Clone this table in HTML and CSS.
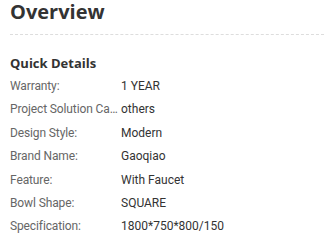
FILE: index.html
```html
<!DOCTYPE html>
<html>
<head>
<meta charset="utf-8">
<link rel="stylesheet" href="styles.css">
</head>
<body>
<div class="overview">
  <h2 class="title">Overview</h2>
  <h3 class="subtitle">Quick Details</h3>
  <dl class="details">
    <div class="row"><dt class="label">Warranty:</dt><dd class="value">1 YEAR</dd></div>
    <div class="row"><dt class="label">Project Solution Capability:</dt><dd class="value">others</dd></div>
    <div class="row"><dt class="label">Design Style:</dt><dd class="value">Modern</dd></div>
    <div class="row"><dt class="label">Brand Name:</dt><dd class="value">Gaoqiao</dd></div>
    <div class="row"><dt class="label">Feature:</dt><dd class="value">With Faucet</dd></div>
    <div class="row"><dt class="label">Bowl Shape:</dt><dd class="value">SQUARE</dd></div>
    <div class="row"><dt class="label">Specification:</dt><dd class="value">1800*750*800/150</dd></div>
  </dl>
</div>
</body>
</html>
```
FILE: styles.css
```css
html, body {
  margin: 0;
  padding: 0;
  background: #fff;
}
.overview {
  padding-left: 10px;
}
.title {
  margin: 0;
  font-family: "Open Sans", sans-serif;
  font-weight: 700;
  font-size: 20px;
  line-height: 24px;
  color: #333;
  padding-bottom: 10px;
  border-bottom: 1px dashed #ddd;
}
.subtitle {
  margin: 19px 0 0;
  font-family: "Open Sans", sans-serif;
  font-weight: 700;
  font-size: 13px;
  line-height: 18px;
  color: #333;
}
.details {
  margin: 3px 0 0;
  font-family: Roboto, sans-serif;
  font-size: 12px;
}
.row {
  display: flex;
  line-height: 23.4px;
}
.label {
  width: 108px;
  padding-right: 3px;
  flex: none;
  color: #666;
  letter-spacing: -0.12px;
  white-space: nowrap;
  overflow: hidden;
  text-overflow: ellipsis;
}
.value {
  margin: 0;
  color: #333;
}
```
